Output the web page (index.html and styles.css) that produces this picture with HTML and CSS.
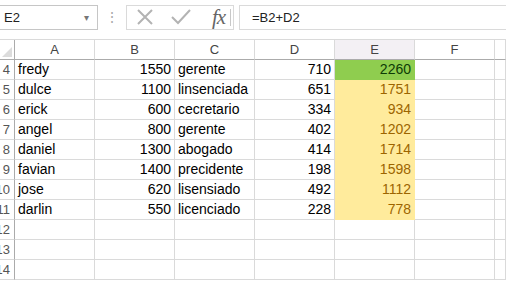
FILE: index.html
```html
<!DOCTYPE html>
<html lang="es">
<head>
  <meta charset="UTF-8" />
  <title>Hoja de cálculo</title>
  <link rel="stylesheet" href="styles.css">
</head>
<body>

<div class="toolbar">
  <div class="name-box">
    <span>E2</span>
    <span class="arrow">&#9662;</span>
  </div>
  <div class="dots">&#8942;</div>
  <div class="fx-buttons">
    <svg class="icon" width="18" height="18" viewBox="0 0 18 18">
      <path d="M2 2 L16 16 M16 2 L2 16" stroke="#b3b3b3" stroke-width="2" fill="none"/>
    </svg>
    <svg class="icon" width="20" height="18" viewBox="0 0 20 18">
      <path d="M1 9 L7 15 L19 2" stroke="#b3b3b3" stroke-width="2" fill="none"/>
    </svg>
    <span class="fx">fx</span>
    <span class="sep"></span>
  </div>
  <div class="formula">=B2+D2</div>
</div>

<div class="sheet" id="sheet"></div>

<script>
  const rows = [
    ['fredy', 1550, 'gerente', 710],
    ['dulce', 1100, 'linsenciada', 651],
    ['erick', 600, 'cecretario', 334],
    ['angel', 800, 'gerente', 402],
    ['daniel', 1300, 'abogado', 414],
    ['favian', 1400, 'precidente', 198],
    ['jose', 620, 'lisensiado', 492],
    ['darlin', 550, 'licenciado', 228]
  ];
  const cols = ['A', 'B', 'C', 'D', 'E', 'F', ''];
  const sheet = document.getElementById('sheet');

  function cell(cls, text) {
    const d = document.createElement('div');
    d.className = cls;
    d.textContent = text;
    sheet.appendChild(d);
  }

  cell('corner', '');
  cols.forEach(c => cell(c === 'E' ? 'col-head active' : 'col-head', c));

  for (let r = 0; r < 11; r++) {
    cell('row-head', r + 4);
    const data = rows[r];
    if (data) {
      cell('cell', data[0]);
      cell('cell num', data[1]);
      cell('cell', data[2]);
      cell('cell num', data[3]);
      cell(r === 0 ? 'cell num good' : 'cell num neutral', data[1] + data[3]);
    } else {
      for (let i = 0; i < 5; i++) cell('cell', '');
    }
    cell('cell', '');
    cell('cell', '');
  }
</script>
</body>
</html>
```

FILE: styles.css
```css
body {
  margin: 0;
  background: #fff;
  font-family: 'Liberation Sans', Arial, sans-serif;
  color: #000;
  overflow: hidden;
}
.toolbar {
  display: flex;
  align-items: center;
  height: 40px;
  box-sizing: border-box;
}
.name-box {
  display: flex;
  justify-content: space-between;
  align-items: center;
  width: 99px;
  height: 25px;
  margin-left: -1px;
  margin-top: -6px;
  border: 1px solid #c6c6c6;
  box-sizing: border-box;
  padding: 0 8px 0 4px;
  font-size: 13px;
  color: #222;
}
.arrow {
  font-size: 10px;
  color: #777;
}
.dots {
  width: 28px;
  margin-top: -6px;
  text-align: center;
  color: #a8a8a8;
  font-size: 14px;
}
.fx-buttons {
  display: flex;
  align-items: center;
  width: 108px;
  height: 25px;
  margin-top: -6px;
  border: 1px solid #dadada;
  box-sizing: border-box;
  padding-left: 9px;
}
.icon {
  margin-right: 17px;
}
.fx {
  font-family: 'Liberation Serif', serif;
  font-style: italic;
  font-size: 21px;
  line-height: 22px;
  color: #666;
  margin-left: 4px;
  letter-spacing: -1px;
}
.sep {
  width: 1px;
  height: 17px;
  background: #c8c8c8;
  margin-left: 5px;
}
.formula {
  flex: 1;
  height: 25px;
  margin-left: 5px;
  margin-top: -6px;
  border: 1px solid #dadada;
  border-right: none;
  box-sizing: border-box;
  padding-left: 12px;
  line-height: 23px;
  font-size: 13px;
  color: #222;
}
.sheet {
  display: grid;
  grid-template-columns: 15px repeat(6, 80px) 11px;
  grid-auto-rows: 20px;
  border-top: 1px solid #dadada;
  margin-top: -1px;
  overflow: hidden;
}
.corner {
  position: relative;
  border-right: 1px solid #ababab;
  border-bottom: 1px solid #ababab;
  overflow: hidden;
}
.corner::after {
  content: '';
  position: absolute;
  right: 2px;
  bottom: 2px;
  border-left: 10px solid transparent;
  border-bottom: 10px solid #dcdcdc;
}
.col-head {
  text-align: center;
  font-size: 13px;
  line-height: 19px;
  color: #444;
  border-right: 1px solid #dadada;
  border-bottom: 1px solid #ababab;
  box-sizing: border-box;
}
.col-head.active {
  background: #f3f0f4;
}
.row-head {
  direction: rtl;
  text-align: right;
  padding-right: 4px;
  font-size: 13px;
  line-height: 20px;
  color: #555;
  border-right: 1px solid #ababab;
  border-bottom: 1px solid #dadada;
  box-sizing: border-box;
  overflow: hidden;
  white-space: nowrap;
}
.cell {
  font-size: 14px;
  line-height: 19px;
  padding: 0 3px;
  border-right: 1px solid #dadada;
  border-bottom: 1px solid #dadada;
  box-sizing: border-box;
  white-space: nowrap;
  overflow: hidden;
}
.num {
  text-align: right;
}
.good {
  background: #8fcd4f;
  color: #0d3b06;
  border-color: #8fcd4f;
}
.neutral {
  background: #ffeb9c;
  color: #9c6500;
  border-color: #ffeb9c;
}
```
